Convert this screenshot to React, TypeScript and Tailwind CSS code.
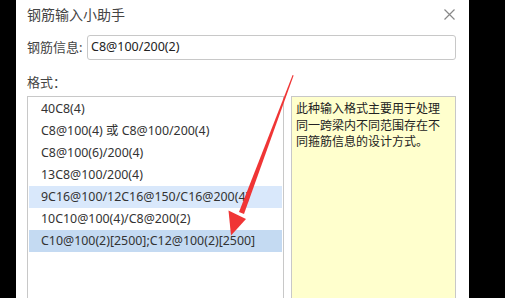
const formats = [
  { text: "40C8(4)", state: "" },
  { text: "C8@100(4) 或 C8@100/200(4)", state: "" },
  { text: "C8@100(6)/200(4)", state: "" },
  { text: "13C8@100/200(4)", state: "" },
  { text: "9C16@100/12C16@150/C16@200(4)", state: "hover" },
  { text: "10C10@100(4)/C8@200(2)", state: "" },
  { text: "C10@100(2)[2500];C12@100(2)[2500]", state: "selected" },
];

const font = { fontFamily: '"Noto Sans", "Noto Sans CJK SC", sans-serif' };

export default function App() {
  return (
    <div
      className="relative w-[505px] h-[298px] bg-black overflow-hidden text-[#333]"
      style={font}
    >
      <div className="ml-[16px] w-[453px] h-[298px] bg-white">
        {/* header */}
        <div className="h-[29px] flex items-center justify-between pl-[11px] pr-[14px]">
          <span className="text-[14px] text-[#444]">钢筋输入小助手</span>
          <svg width="11" height="11" viewBox="0 0 11 11" className="text-[#888]">
            <path d="M0.5 0.5 L10.5 10.5 M10.5 0.5 L0.5 10.5" stroke="currentColor" strokeWidth="1.2" />
          </svg>
        </div>

        {/* info */}
        <div className="mt-[6px] flex items-center pl-[11px]">
          <span className="w-[60px] text-[13px] text-[#444]">钢筋信息:</span>
          <div className="w-[369px] h-[25px] border border-[#c8c8c8] rounded-[3px] flex items-center pl-[3px] text-[12.5px] text-[#222]">
            C8@100/200(2)
          </div>
        </div>

        <div className="mt-[14px] pl-[11px] text-[13px] leading-[16px] text-[#444]">格式：</div>

        <div className="mt-[6px] flex gap-[7px] pl-[11px]">
          <div className="w-[257px] h-[210px] border border-[#c8c8c8] pt-[1px] px-[1px]">
            {formats.map((f, i) => (
              <div
                key={i}
                className={
                  "h-[22px] flex items-center pl-[12px] text-[12.4px] whitespace-nowrap " +
                  (f.state === "hover"
                    ? "bg-[#d9e8fb]"
                    : f.state === "selected"
                    ? "bg-[#c4daf2]"
                    : "")
                }
              >
                {f.text}
              </div>
            ))}
          </div>
          <div className="w-[165px] h-[210px] border border-[#c8c8c8] bg-[#ffffcd] px-[4px] pt-[4px] text-[12px] leading-[16.5px] text-[#222]">
            此种输入格式主要用于处理同一跨梁内不同范围存在不同箍筋信息的设计方式。
          </div>
        </div>
      </div>

      {/* red annotation arrow */}
      <svg className="absolute left-0 top-0 pointer-events-none" width="505" height="298">
        <polygon points="292.6,75 293.6,75.4 244,214 239,212" fill="#f03535" />
        <polygon points="228.5,210.5 246,219 231,235.5" fill="#f03535" />
      </svg>
    </div>
  );
}
